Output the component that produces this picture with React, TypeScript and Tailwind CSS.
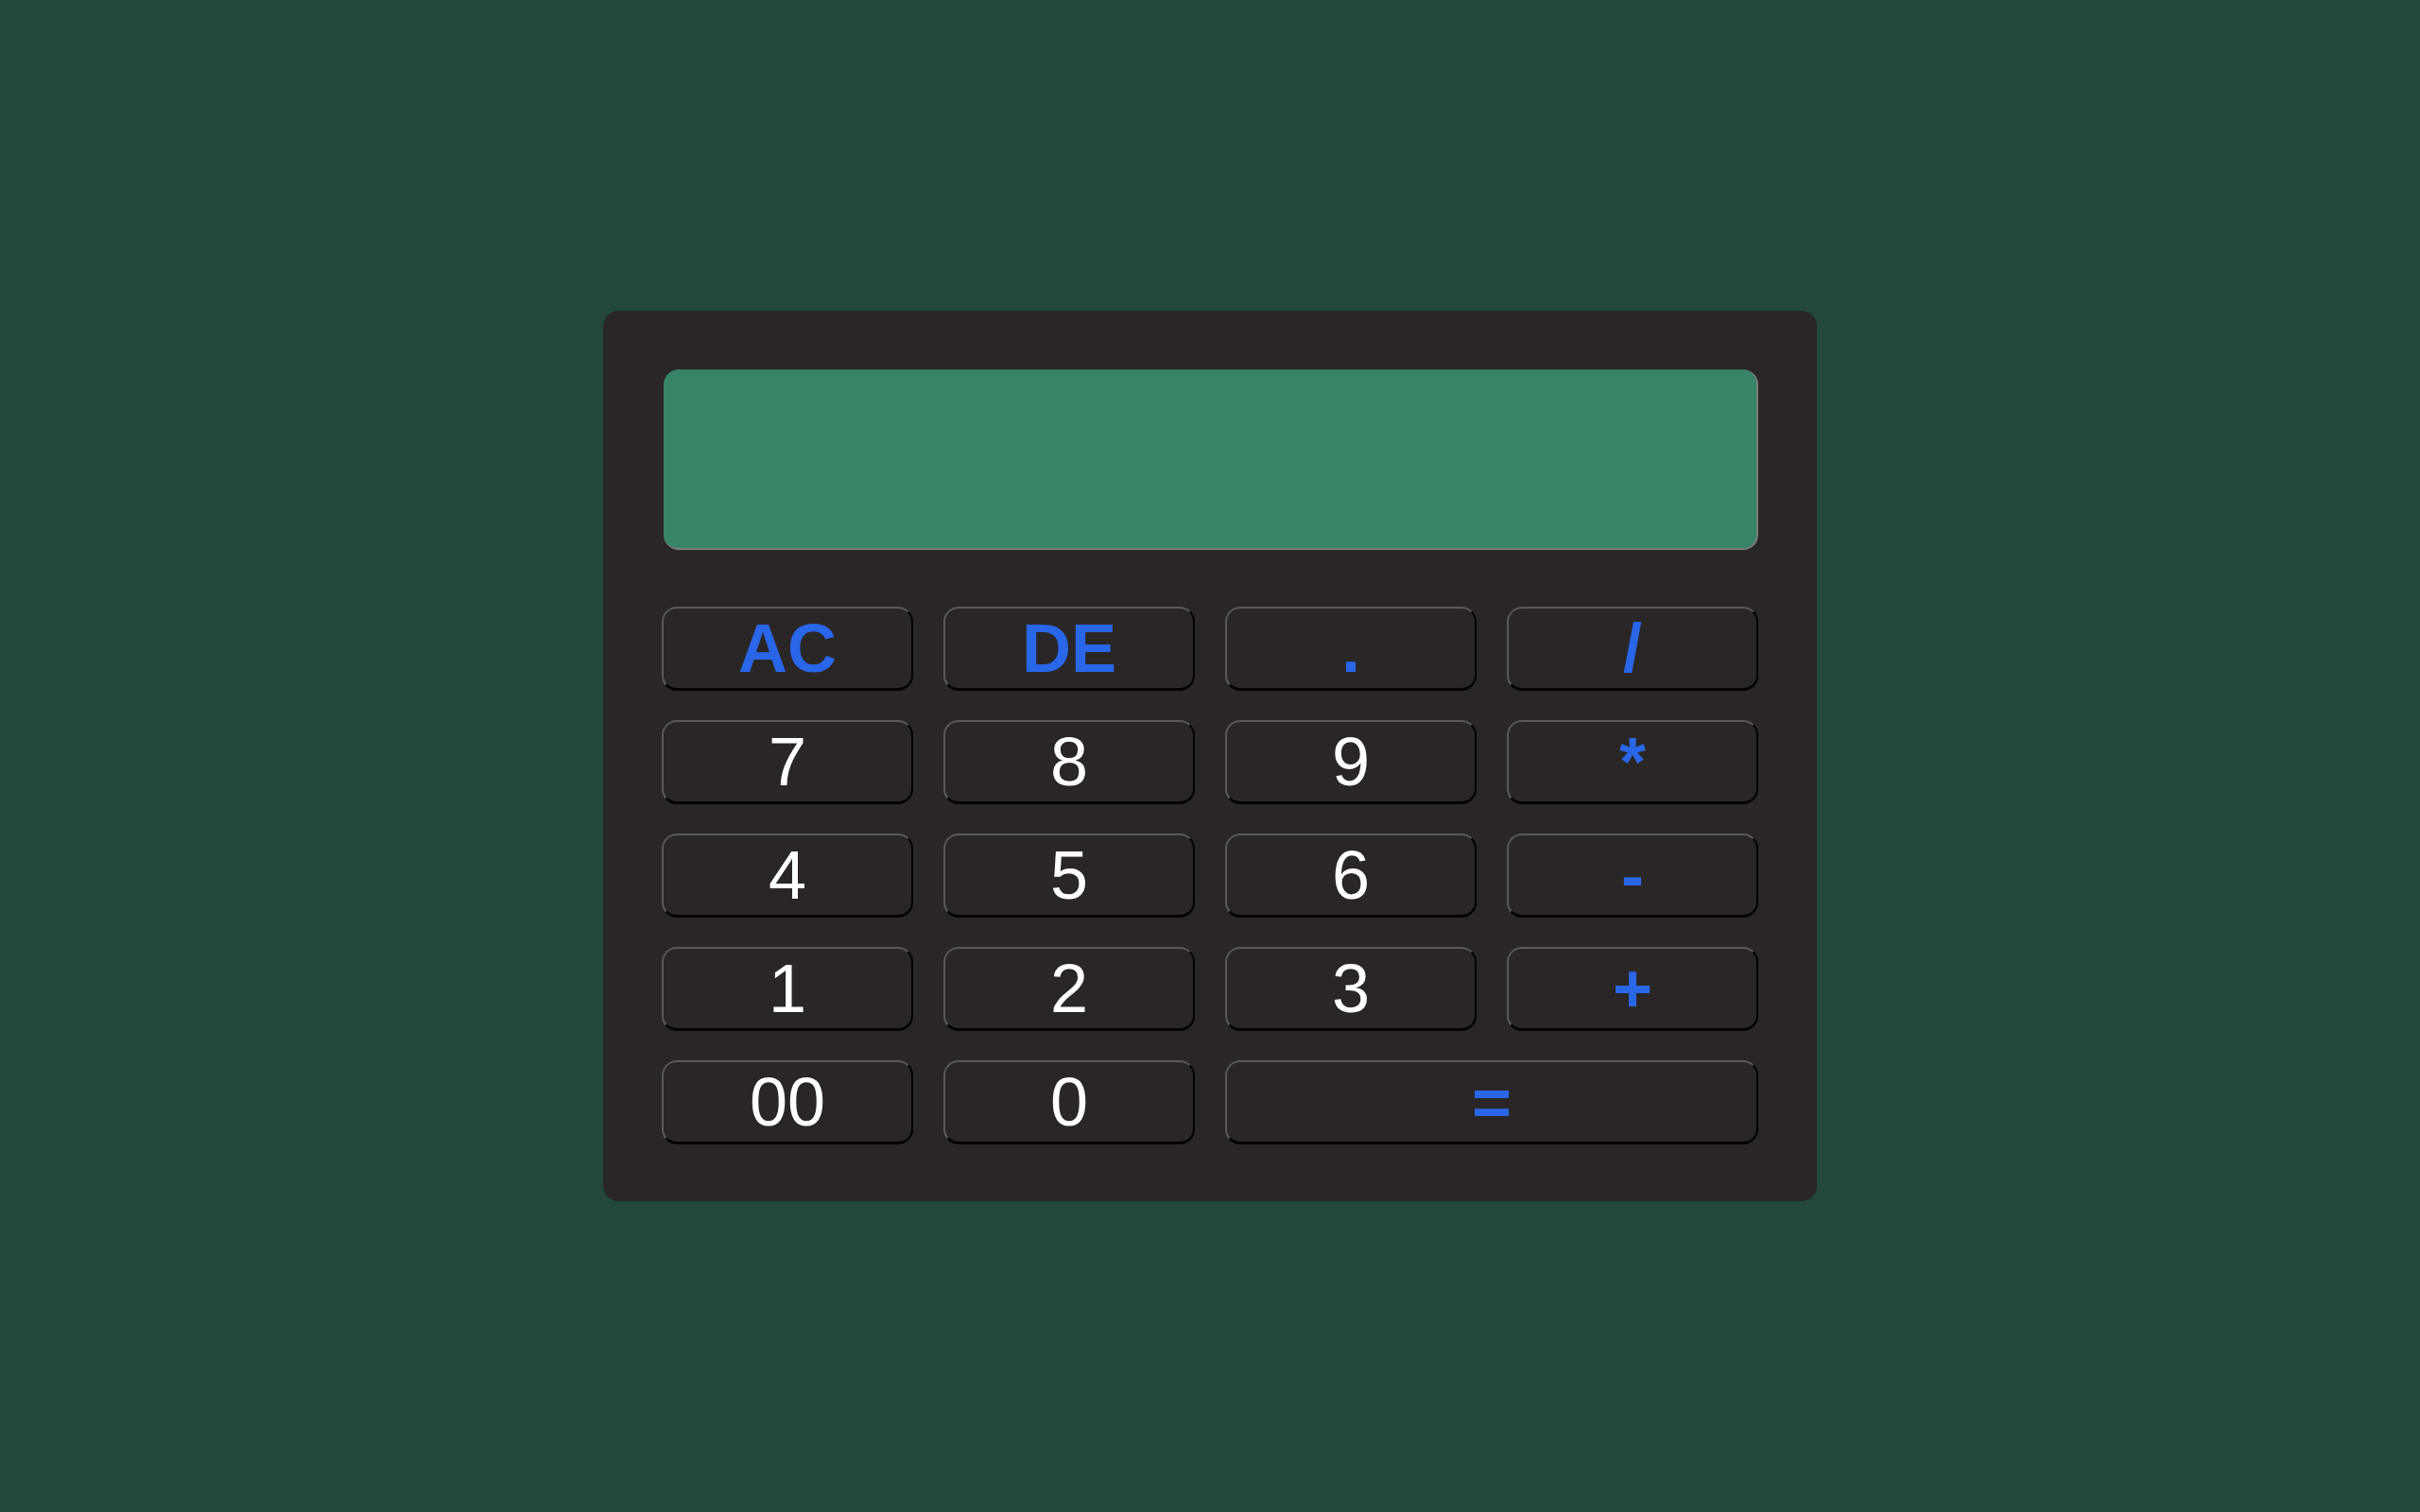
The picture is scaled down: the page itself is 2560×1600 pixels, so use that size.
import React from "react";

type Key = { label: string; kind: "num" | "op" | "fn"; wide?: boolean };

const keys: Key[] = [
  { label: "AC", kind: "fn" },
  { label: "DE", kind: "fn" },
  { label: ".", kind: "op" },
  { label: "/", kind: "op" },
  { label: "7", kind: "num" },
  { label: "8", kind: "num" },
  { label: "9", kind: "num" },
  { label: "*", kind: "op" },
  { label: "4", kind: "num" },
  { label: "5", kind: "num" },
  { label: "6", kind: "num" },
  { label: "-", kind: "op" },
  { label: "1", kind: "num" },
  { label: "2", kind: "num" },
  { label: "3", kind: "num" },
  { label: "+", kind: "op" },
  { label: "00", kind: "num" },
  { label: "0", kind: "num" },
  { label: "=", kind: "op", wide: true },
];

function CalcKey({ k }: { k: Key }) {
  const color = k.kind === "num" ? "text-white font-normal" : "text-[#2a66e8] font-bold";
  return (
    <button
      className={
        "flex items-center justify-center h-[89px] rounded-[16px] border-2 border-b-[3px] border-t-[#5a5858] border-l-[#5a5858] border-b-black border-r-black bg-[#2a2626] text-[72px] leading-none " +
        color +
        (k.wide ? " col-span-2" : "")
      }
    >
      {k.label}
    </button>
  );
}

export default function App() {
  return (
    <div
      className="min-h-screen w-full flex items-center justify-center bg-[#234739]"
      style={{ fontFamily: '"Liberation Sans", Arial, sans-serif' }}
    >
      <div className="w-[1284px] rounded-[16px] bg-[#2a2626] pl-[62px] pr-[62px] pt-[62px] pb-[60px]">
        <div className="ml-[2px] h-[191px] rounded-[16px] bg-[#388467] border-b-2 border-r-2 border-b-[#7a7a7a] border-r-[#7a7a7a]" />
        <div className="mt-[60px] grid grid-cols-4 gap-x-[32px] gap-y-[31px]">
          {keys.map((k) => (
            <CalcKey key={k.label} k={k} />
          ))}
        </div>
      </div>
    </div>
  );
}
